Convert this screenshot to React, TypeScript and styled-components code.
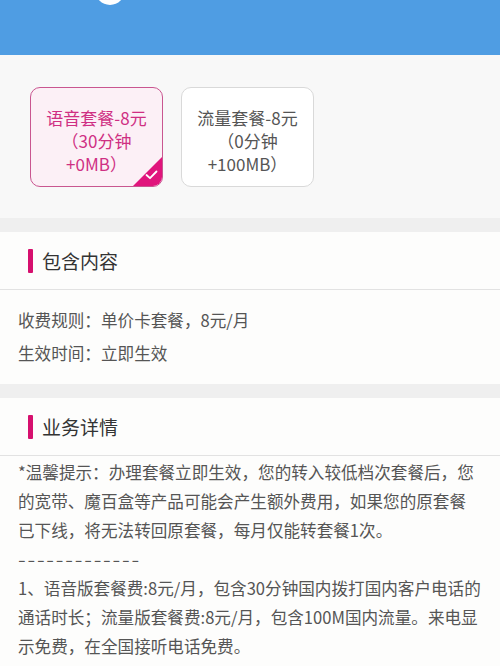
import React, { useState } from "react";
import styled, { createGlobalStyle } from "styled-components";

const GlobalStyle = createGlobalStyle`
  html, body {
    margin: 0;
    padding: 0;
    background: #fdfdfc;
  }
  body {
    font-family: "Noto Sans CJK SC", "Noto Sans", sans-serif;
    -webkit-font-smoothing: antialiased;
  }
`;

type Plan = {
  id: string;
  lines: string[];
};

const plans: Plan[] = [
  { id: "voice", lines: ["语音套餐-8元", "（30分钟", "+0MB）"] },
  { id: "data", lines: ["流量套餐-8元", "（0分钟", "+100MB）"] },
];

const Page = styled.div`
  width: 500px;
  min-height: 666px;
  overflow: hidden;
  background: #fdfdfc;
`;

const Header = styled.header`
  height: 55px;
  background: #4f9de3;
  display: flex;
  align-items: flex-start;
  padding-left: 94px;
  overflow: hidden;
`;

const Avatar = styled.svg`
  margin-top: -26px;
  flex-shrink: 0;
`;

const PlanArea = styled.div`
  background: #f8f8f8;
  padding: 32px 30px 31px;
  display: flex;
  gap: 18px;
`;

const PlanCard = styled.button<{ $active: boolean }>`
  position: relative;
  width: 133px;
  height: 100px;
  box-sizing: border-box;
  border-radius: 10px;
  border: 1px solid ${(p) => (p.$active ? "#c95690" : "#d9d9d9")};
  background: ${(p) => (p.$active ? "#fcf0f6" : "#ffffff")};
  color: ${(p) => (p.$active ? "#cf2f83" : "#555555")};
  font-family: inherit;
  font-size: 17px;
  line-height: 23px;
  padding: 6px 0 0;
  overflow: hidden;
  cursor: pointer;
  display: flex;
  flex-direction: column;
  align-items: center;
  justify-content: center;
`;

const PlanLine = styled.span`
  display: block;
  white-space: nowrap;
`;

const Badge = styled.span`
  position: absolute;
  right: 0;
  bottom: 0;
  width: 0;
  height: 0;
  border-style: solid;
  border-width: 0 0 29px 29px;
  border-color: transparent transparent #e0157c transparent;
`;

const BadgeCheck = styled.svg`
  position: absolute;
  right: 4px;
  bottom: 6px;
`;

const Gap = styled.div`
  height: 14px;
  background: #efefef;
`;

const Section = styled.section`
  background: #fdfdfc;
`;

const SectionHead = styled.div`
  height: 57px;
  display: flex;
  align-items: center;
  gap: 9px;
  padding-left: 28px;
  border-bottom: 1px solid #e2e2e2;
`;

const Bar = styled.span`
  width: 5px;
  height: 24px;
  background: #d6106e;
  border-radius: 1px;
`;

const Title = styled.h2`
  margin: 0;
  font-size: 19px;
  font-weight: 400;
  color: #333333;
  line-height: 24px;
`;

const InfoList = styled.div`
  padding: 14px 18px 14px;
`;

const InfoRow = styled.div`
  font-size: 16.6px;
  line-height: 33px;
  color: #555555;
`;

const Detail = styled.div`
  padding: 2px 18px 0;
  font-size: 16.6px;
  line-height: 29px;
  color: #555555;
  white-space: nowrap;
`;

const Dashes = styled.span`
  display: inline-block;
  letter-spacing: 1.3px;
  transform: scaleX(1.34);
  transform-origin: left center;
`;

export default function App() {
  const [selected, setSelected] = useState("voice");

  return (
    <Page>
      <GlobalStyle />
      <Header>
        <Avatar width="32" height="32" viewBox="0 0 32 32">
          <circle cx="16" cy="16" r="15" fill="#ffffff" />
          <circle cx="16" cy="14" r="10.5" fill="#cfd9e4" />
        </Avatar>
      </Header>

      <PlanArea>
        {plans.map((plan) => {
          const active = plan.id === selected;
          return (
            <PlanCard
              key={plan.id}
              $active={active}
              onClick={() => setSelected(plan.id)}
            >
              {plan.lines.map((line) => (
                <PlanLine key={line}>{line}</PlanLine>
              ))}
              {active && (
                <>
                  <Badge />
                  <BadgeCheck width="13" height="10" viewBox="0 0 13 10">
                    <polyline
                      points="1.5,5 5,8.2 11.5,1.5"
                      fill="none"
                      stroke="#ffffff"
                      strokeWidth="1.8"
                      strokeLinecap="round"
                      strokeLinejoin="round"
                    />
                  </BadgeCheck>
                </>
              )}
            </PlanCard>
          );
        })}
      </PlanArea>

      <Gap />

      <Section>
        <SectionHead>
          <Bar />
          <Title>包含内容</Title>
        </SectionHead>
        <InfoList>
          <InfoRow>收费规则：单价卡套餐，8元/月</InfoRow>
          <InfoRow>生效时间：立即生效</InfoRow>
        </InfoList>
      </Section>

      <Gap />

      <Section>
        <SectionHead>
          <Bar />
          <Title>业务详情</Title>
        </SectionHead>
        <Detail>
          *温馨提示：办理套餐立即生效，您的转入较低档次套餐后，您
          <br />
          的宽带、魔百盒等产品可能会产生额外费用，如果您的原套餐
          <br />
          已下线，将无法转回原套餐，每月仅能转套餐1次。
          <br />
          <Dashes>-------------</Dashes>
          <br />
          1、语音版套餐费:8元/月，包含30分钟国内拨打国内客户电话的
          <br />
          通话时长；流量版套餐费:8元/月，包含100M国内流量。来电显
          <br />
          示免费，在全国接听电话免费。
        </Detail>
      </Section>
    </Page>
  );
}
